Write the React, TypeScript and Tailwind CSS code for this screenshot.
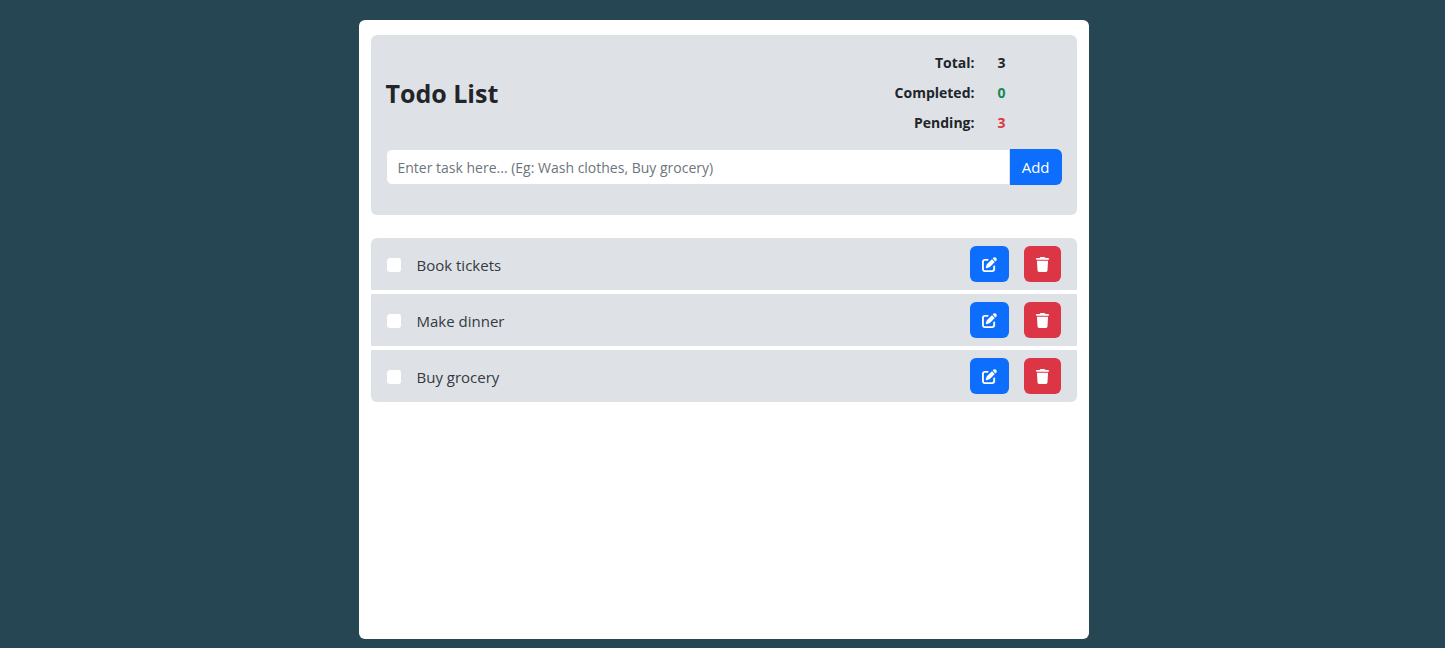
import { useState } from "react";
import type { FormEvent } from "react";
import { FaPenToSquare, FaTrash } from "react-icons/fa6";

type Task = { id: number; title: string; done: boolean };

const initialTasks: Task[] = [
  { id: 1, title: "Book tickets", done: false },
  { id: 2, title: "Make dinner", done: false },
  { id: 3, title: "Buy grocery", done: false },
];

type StatProps = { label: string; value: number; color: string };

function Stat({ label, value, color }: StatProps) {
  return (
    <div className="flex gap-[23px]">
      <dt className="flex-1 text-right">{label}:</dt>
      <dd className={`w-16 ${color}`}>{value}</dd>
    </div>
  );
}

type TaskRowProps = {
  task: Task;
  onToggle: () => void;
  onEdit: () => void;
  onDelete: () => void;
};

function TaskRow({ task, onToggle, onEdit, onDelete }: TaskRowProps) {
  return (
    <li className="flex h-[52px] items-center bg-[#dee2e6] px-4 first:rounded-t-md last:rounded-b-md">
      <label className="flex flex-1 items-center gap-4 pt-0.5 text-[#343a40]">
        <input
          type="checkbox"
          checked={task.done}
          onChange={onToggle}
          className="size-3.5 appearance-none rounded-[3px] bg-white checked:bg-[#0d6efd]"
        />
        <span className={task.done ? "line-through" : ""}>{task.title}</span>
      </label>
      <div className="flex gap-[15px]">
        <button
          type="button"
          aria-label={`Edit ${task.title}`}
          onClick={onEdit}
          className="flex h-9 items-center rounded-md bg-[#0d6efd] px-3 text-white"
        >
          <FaPenToSquare className="size-[15px]" />
        </button>
        <button
          type="button"
          aria-label={`Delete ${task.title}`}
          onClick={onDelete}
          className="flex h-9 items-center rounded-md bg-[#dc3545] px-3 text-white"
        >
          <FaTrash className="h-[15px] w-[13px]" />
        </button>
      </div>
    </li>
  );
}

export default function App() {
  const [tasks, setTasks] = useState(initialTasks);
  const [draft, setDraft] = useState("");
  const completed = tasks.filter((task) => task.done).length;

  function addTask(event: FormEvent) {
    event.preventDefault();
    const title = draft.trim();
    if (!title) return;
    setTasks([{ id: Date.now(), title, done: false }, ...tasks]);
    setDraft("");
  }

  function removeTask(id: number) {
    setTasks(tasks.filter((task) => task.id !== id));
  }

  return (
    <div className="flex min-h-screen flex-col items-center bg-[#264653] pt-5 pr-4 pb-[9px] pl-[18px] font-['Open_Sans','Noto_Sans',sans-serif] text-[15px] leading-[23px] text-[#212529]">
      <main className="flex w-full max-w-[730px] flex-1 flex-col gap-[23px] rounded-md bg-white px-3 py-[15px]">
        <header className="flex flex-col gap-[15px] rounded-md bg-[#dee2e6] px-[15px] pt-4 pb-[30px]">
          <div className="flex items-center">
            <h1 className="flex-1 text-[25px] leading-8 font-bold">Todo List</h1>
            <dl className="flex flex-1 flex-col gap-[7px] text-[14px] font-bold">
              <Stat label="Total" value={tasks.length} color="text-[#212529]" />
              <Stat label="Completed" value={completed} color="text-[#198754]" />
              <Stat label="Pending" value={tasks.length - completed} color="text-[#dc3545]" />
            </dl>
          </div>
          <form onSubmit={addTask} className="flex">
            <input
              type="text"
              aria-label="New task"
              placeholder="Enter task here... (Eg: Wash clothes, Buy grocery)"
              value={draft}
              onChange={(event) => setDraft(event.target.value)}
              className="h-9 min-w-0 flex-1 rounded-l-md border border-[#dee2e6] bg-white px-[11px] text-[14px] placeholder:text-[#6c757d] focus:outline-none"
            />
            <button type="submit" className="h-9 rounded-r-md bg-[#0d6efd] px-3 text-white">
              Add
            </button>
          </form>
        </header>
        <ul className="flex flex-col gap-1">
          {tasks.map((task) => (
            <TaskRow
              key={task.id}
              task={task}
              onToggle={() =>
                setTasks(tasks.map((t) => (t.id === task.id ? { ...t, done: !t.done } : t)))
              }
              onEdit={() => {
                setDraft(task.title);
                removeTask(task.id);
              }}
              onDelete={() => removeTask(task.id)}
            />
          ))}
        </ul>
      </main>
    </div>
  );
}
